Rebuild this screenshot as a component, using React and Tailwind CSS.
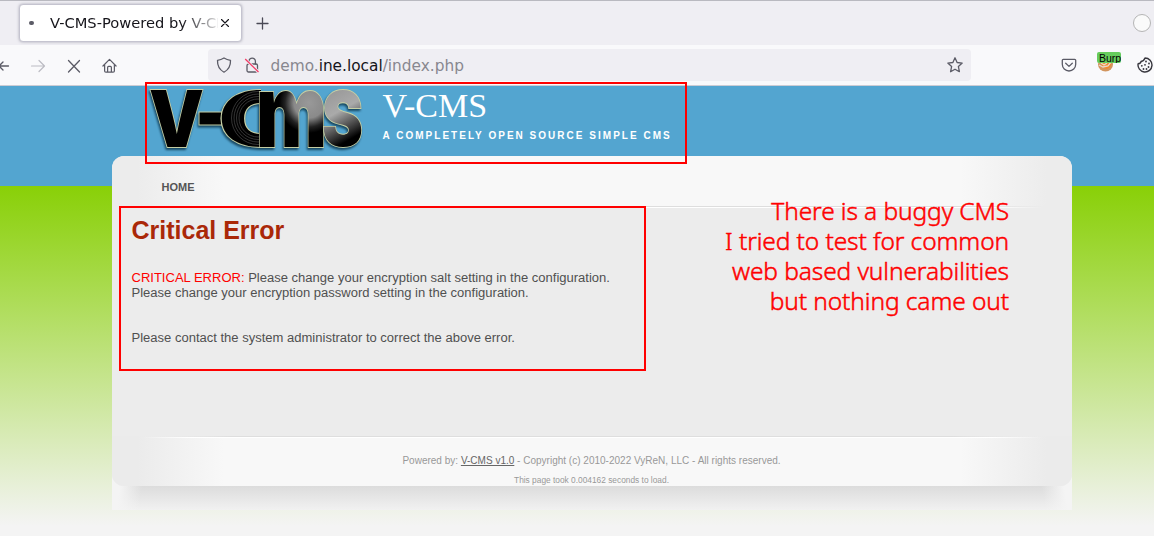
import React from "react";

const stroke = { fill: "none", stroke: "currentColor", strokeWidth: 1.3, strokeLinecap: "round", strokeLinejoin: "round" };

function TabStrip() {
  return (
    <div className="flex h-[45px] items-start border-t border-[#b9b9c0] bg-[#efeef3] pl-[19px] pr-[3px] pt-[3px]">
      <div className="flex h-[38px] w-[223px] items-center rounded-[4px] border border-[#c5c4d0] bg-white pl-[9px] text-[#15141a] shadow-[0_0_3px_#a9a8b5]">
        <span className="h-1 w-[5px] rounded-full bg-[#5b5b66]" />
        <span className="ml-[16px] w-[168px] overflow-hidden whitespace-nowrap bg-[linear-gradient(90deg,#15141a_78%,#15141a00_104%)] bg-clip-text font-['DejaVu_Sans',sans-serif] text-[14.67px] leading-5 text-transparent">
          V-CMS-Powered by V-CMS
        </span>
        <svg className="ml-[2px]" width="10" height="10" viewBox="0 0 10 10"><path d="M1.500 1.500l7 7m0-7l-7 7" {...stroke} strokeWidth="1.100" /></svg>
      </div>
      <svg className="ml-[14px] mt-[13px] text-[#4a4955]" width="13" height="13" viewBox="0 0 13 13"><path d="M6.500 1v11M1 6.500h11" {...stroke} /></svg>
      <span className="ml-auto mt-[10px] h-[18px] w-[18px] rounded-full border border-[#b5b5b5] bg-[#fafafa]" />
    </div>
  );
}

function Toolbar() {
  return (
    <div className="flex h-[41px] items-start border-b border-[#ccccd4] bg-[#f9f9fb] pt-1 text-[#5b5b66]">
      <div className="flex h-8 w-[208px] items-center pt-px">
        <svg width="10" height="16" viewBox="0 0 10 16"><path d="M8.500 8H0M3 4L-1 8l4 4" {...stroke} /></svg>
        <svg className="ml-5 text-[#bcbcc3]" width="16" height="16" viewBox="0 0 16 16"><path d="M1.500 8h13M9 2.500l5.500 5.500L9 13.500" {...stroke} strokeWidth="1.200" /></svg>
        <svg className="ml-5" width="16" height="16" viewBox="0 0 16 16"><path d="M2.500 2.500l11 11.500M13.500 2.500l-11 11.500" {...stroke} /></svg>
        <svg className="ml-5" width="15" height="16" viewBox="0 0 16 16"><path d="M1 8l7-7 7 7M2.800 7v6.200q0 1.300 1.300 1.300h7.800q1.300 0 1.300-1.300V7M6 14.200V9.500q0-1 1-1h2q1 0 1 1v4.700" {...stroke} /></svg>
      </div>
      <div className="flex h-8 w-[763px] items-center rounded-[4px] bg-[#efeef3] px-2">
        <svg width="16" height="16" viewBox="0 0 16 16"><path d="M8 1Q11 2.800 14.500 3.400C14.700 8.500 13 12.500 8 15.200C3 12.500 1.300 8.500 1.500 3.400Q5 2.800 8 1Z" {...stroke} /></svg>
        <svg className="ml-3" width="16" height="16" viewBox="0 0 16 16">
          <rect x="3" y="7" width="10.500" height="8" rx="1.500" {...stroke} />
          <path d="M5 7V4.300a3.200 3.200 0 016.400 0V7" {...stroke} />
          <path d="M1.500 2.500L14.500 15" stroke="#efeef3" strokeWidth="3" />
          <path d="M1.200 2L14.500 15" stroke="#f23d67" strokeWidth="1.300" />
        </svg>
        <span className="ml-[10.500px] mt-px whitespace-nowrap font-['DejaVu_Sans',sans-serif] text-[15.35px] leading-5 text-[#88878f]">
          demo.<span className="text-[#15141a]">ine.local</span>/index.php
        </span>
        <svg className="ml-auto" width="16" height="16" viewBox="0 0 16 16"><path d="M8 .8l2.100 4.700 5.100.6-3.800 3.500 1 5.100L8 12.200l-4.400 2.500 1-5.100L.8 6.100l5.100-.6Z" {...stroke} /></svg>
      </div>
      <svg className="ml-[90px] mt-2" width="16" height="16" viewBox="0 0 16 16"><path d="M1.300 3.300q0-1 1-1h11.400q1 0 1 1V7.300a6.700 6.700 0 01-13.400 0ZM4.700 6.300L8 9.400l3.300-3.100" {...stroke} /></svg>
      <div className="ml-5 mt-[3px] flex w-6 flex-col">
        <div className="z-10 h-[11px] overflow-hidden rounded-[2px] bg-[#66cc5c] pl-[2px] font-['Liberation_Sans',sans-serif] text-[10.500px] leading-[12px] text-black">Burp</div>
        <svg className="-mt-[5px]" width="18" height="14" viewBox="0 0 18 14">
          <ellipse cx="8.500" cy="6.500" rx="7.500" ry="7" fill="#d2955e" />
          <path d="M4 4h10q1 5-4 7-6-1-6-7Z" fill="#f0882d" />
          <path d="M2 7l4 2 5-1 3-4M4 5l3 2 3-2" fill="none" stroke="#e9d9cc" strokeWidth="1.300" />
        </svg>
      </div>
      <svg className="ml-4 mt-2 shrink-0 text-[#38373e]" width="16" height="16" viewBox="0 0 16 16">
        <path d="M8 1a7 7 0 11-6.900 5.800Q4 6.500 4 4.500 7 4 8 1Z" {...stroke} strokeWidth="1.400" />
        <g fill="currentColor"><circle cx="9" cy="4.500" r=".9" /><circle cx="12" cy="6.500" r=".9" /><circle cx="4.800" cy="8.800" r=".9" /><circle cx="8" cy="7.800" r=".9" /><circle cx="11.500" cy="10" r=".9" /><circle cx="6.500" cy="12" r=".9" /><circle cx="9.500" cy="12" r=".9" /></g>
      </svg>
    </div>
  );
}

function Logo() {
  const grooves = [19, 21.5, 24, 26.5];
  const face = { fontFamily: "Inter, sans-serif", fontWeight: 900, lengthAdjust: "spacingAndGlyphs", stroke: "#c5cfa5", strokeWidth: 1.8, paintOrder: "stroke" };
  return (
    <svg className="h-[70px] w-[222px] drop-shadow-[-1px_2px_1px_#174761]" viewBox="146 86 222 70">
      <defs>
        <radialGradient id="arch" gradientUnits="userSpaceOnUse" cx="309" cy="103" r="30">
          <stop offset="0" stopColor="#999" /><stop offset=".5" stopColor="#8a8a8a" /><stop offset=".8" stopColor="#222" /><stop offset="1" stopColor="#000" />
        </radialGradient>
        <linearGradient id="tail" x1="0" y1="0" x2=".25" y2="1">
          <stop offset=".25" stopColor="#999" /><stop offset=".5" stopColor="#aaa" /><stop offset=".75" stopColor="#333" /><stop offset=".85" stopColor="#000" />
        </linearGradient>
        <clipPath id="half"><rect x="210" y="86" width="51" height="70" /></clipPath>
        <clipPath id="disc"><text x="218" y="146" fontFamily="Inter, sans-serif" fontWeight="900" fontSize="76" textLength="82" lengthAdjust="spacingAndGlyphs">C</text></clipPath>
      </defs>
      <text x="149" y="147" fontSize="78" textLength="55" {...face}>V</text>
      <rect x="199" y="112" width="23" height="13" stroke="#c5cfa5" />
      <g clipPath="url(#half)">
        <text x="218" y="146" fontSize="76" textLength="82" {...face}>C</text>
        <g clipPath="url(#disc)" fill="none" stroke="#4a4a4a" strokeWidth=".7">
          {grooves.map((r) => <circle key={r} cx="258" cy="118" r={r} />)}
        </g>
      </g>
      <text x="256" y="147" fontSize="101" textLength="71" fill="url(#arch)" {...face}>m</text>
      <text x="322" y="146" fontSize="76" textLength="41" fill="url(#tail)" {...face}>S</text>
    </svg>
  );
}

function Footer() {
  return (
    <footer className="h-[50px] rounded-b-[12px] bg-[linear-gradient(90deg,#ebebeb_25px,#f8f8f8_112px,#f8f8f8_848px,#ebebeb_935px)] text-center text-[#999]">
      <div className="h-px bg-[linear-gradient(90deg,transparent_30px,#dedede_120px,#dedede_840px,transparent_930px)]" />
      <div className="h-px bg-[linear-gradient(90deg,transparent_30px,#fff_80px,#fff_880px,transparent_930px)]" />
      <p className="pr-px pt-[15px] text-[10.03px] leading-4">Powered by: <a className="text-[#666] underline">V-CMS v1.0</a> - Copyright (c) 2010-2022 VyReN, LLC - All rights reserved.</p>
      <p className="pr-px pt-[6px] text-[8.35px] leading-[10px]">This page took 0.004162 seconds to load.</p>
    </footer>
  );
}

export default function App() {
  return (
    <div className="relative h-[545px] w-[1154px] overflow-hidden bg-white font-['Liberation_Sans',Arial,sans-serif]">
      <TabStrip />
      <Toolbar />
      <div className="h-[450px] bg-[linear-gradient(#53a5d0_100px,#89d007_100px,#f4f4f4_440px)] pl-[112px]">
        <div className="w-[960px]">
          <header className="flex h-[70px] pl-[34px] text-white">
            <Logo />
            <div className="ml-[14.500px]">
              <div className="font-['Liberation_Serif',serif] text-[34px] leading-[40px]">V-CMS</div>
              <div className="mt-1 whitespace-nowrap text-[10px] font-bold leading-3 tracking-[2.02px]">A COMPLETELY OPEN SOURCE SIMPLE CMS</div>
            </div>
          </header>
          <div className="bg-[linear-gradient(transparent_100px,#f4f4f4_300px)]">
            <div className="rounded-[12px] bg-[#ececec]">
              <nav className="h-[50px] rounded-t-[12px] bg-[linear-gradient(90deg,#ececec_25px,#f8f8f8_112px,#f8f8f8_848px,#ececec_935px)] pl-[49.500px] pt-[25px] text-[11px] font-bold leading-[13px] text-[#555]">HOME</nav>
              <div className="h-px bg-[linear-gradient(90deg,transparent_30px,#dedede_120px,#dedede_840px,transparent_930px)]" />
              <div className="h-px bg-[linear-gradient(90deg,transparent_30px,#fff_80px,#fff_880px,transparent_930px)]" />
              <main className="h-[228px] pl-[19.500px] pt-2 text-[13.02px] leading-[15px] text-[#505050]">
                <h1 className="text-[25px] font-bold leading-[29px] text-[#aa2808]">Critical Error</h1>
                <p className="mt-[25px]"><span className="text-[#f00]">CRITICAL ERROR:</span> Please change your encryption salt setting in the configuration.<br />Please change your encryption password setting in the configuration.</p>
                <p className="mt-[30px]">Please contact the system administrator to correct the above error.</p>
              </main>
              <Footer />
            </div>
            <div className="h-6 bg-[linear-gradient(100deg,#f4f4f4_8px,#f4f4f400_30px),linear-gradient(260deg,#f4f4f4_8px,#f4f4f400_30px),linear-gradient(#dcdcdc,#f1f1f1)]" />
          </div>
        </div>
      </div>
      <div className="absolute left-[145px] top-[82px] h-[82px] w-[542px] border-2 border-[#f00]" />
      <div className="absolute left-[119px] top-[206px] h-[165px] w-[527px] border-2 border-[#f00]" />
      <div className="absolute right-[145px] top-[196px] whitespace-nowrap text-right font-['Noto_Sans','Open_Sans',sans-serif] text-[24.500px] font-light leading-[30px] tracking-[-0.1px] text-[#f00] [-webkit-text-stroke:0.5px_#f00]">
        There is a buggy CMS<br />I tried to test for common<br />web based vulnerabilities<br />but nothing came out
      </div>
    </div>
  );
}
